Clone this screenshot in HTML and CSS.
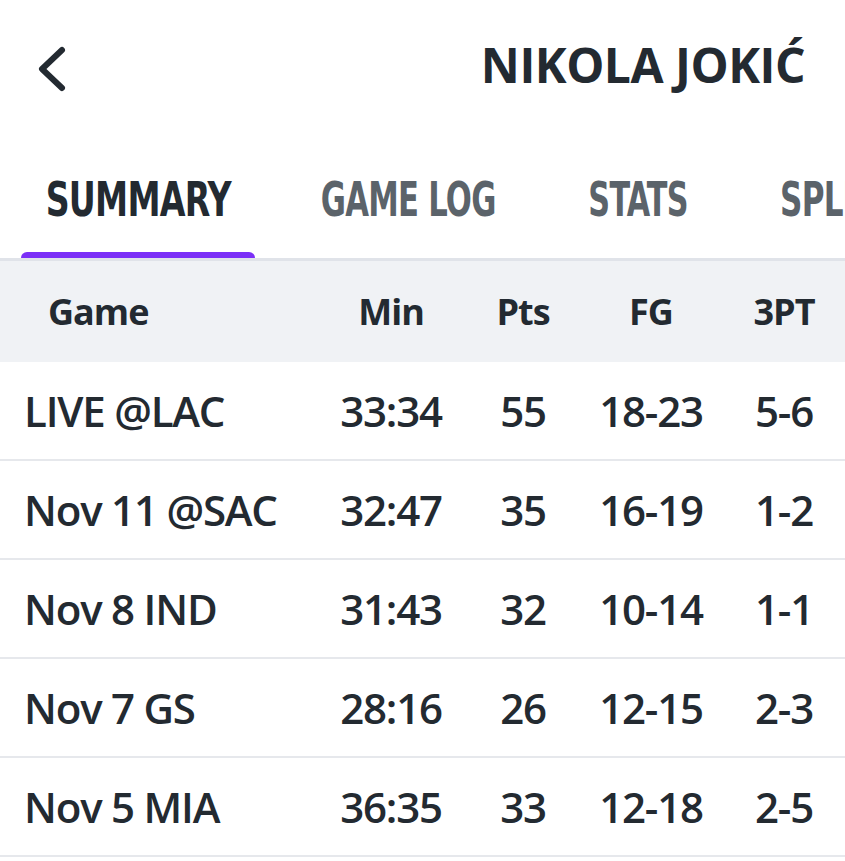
FILE: index.html
```html
<!DOCTYPE html>
<html>
<head>
<meta charset="utf-8">
<link rel="stylesheet" href="styles.css">
</head>
<body>
<div class="page">
  <header class="topbar">
    <svg class="back" width="44" height="60" viewBox="0 0 44 60">
      <path d="M37 10 L17 29 L37 48" fill="none" stroke="#232a31" stroke-width="6" stroke-linecap="round" stroke-linejoin="round"/>
    </svg>
    <h1 class="title">NIKOLA JOKIĆ</h1>
  </header>
  <nav class="tabs">
    <div class="tab tab-summary active"><span>SUMMARY</span></div>
    <div class="tab tab-log"><span>GAME LOG</span></div>
    <div class="tab tab-stats"><span>STATS</span></div>
    <div class="tab tab-splits"><span>SPLITS</span></div>
  </nav>
  <div class="table">
    <div class="row head">
      <div class="c game">Game</div><div class="c">Min</div><div class="c">Pts</div><div class="c">FG</div><div class="c">3PT</div>
    </div>
    <div class="row">
      <div class="c game">LIVE @LAC</div><div class="c">33:34</div><div class="c">55</div><div class="c">18-23</div><div class="c">5-6</div>
    </div>
    <div class="row">
      <div class="c game">Nov 11 @SAC</div><div class="c">32:47</div><div class="c">35</div><div class="c">16-19</div><div class="c">1-2</div>
    </div>
    <div class="row">
      <div class="c game">Nov 8 IND</div><div class="c">31:43</div><div class="c">32</div><div class="c">10-14</div><div class="c">1-1</div>
    </div>
    <div class="row">
      <div class="c game">Nov 7 GS</div><div class="c">28:16</div><div class="c">26</div><div class="c">12-15</div><div class="c">2-3</div>
    </div>
    <div class="row">
      <div class="c game">Nov 5 MIA</div><div class="c">36:35</div><div class="c">33</div><div class="c">12-18</div><div class="c">2-5</div>
    </div>
  </div>
</div>
</body>
</html>
```
FILE: styles.css
```css
html, body {
  margin: 0;
  padding: 0;
  background: #ffffff;
}
body {
  font-family: "Open Sans", "Noto Sans", sans-serif;
  color: #232a31;
  width: 845px;
  height: 861px;
  overflow: hidden;
}
.page {
  width: 845px;
}
.topbar {
  height: 140px;
  display: flex;
  align-items: flex-start;
  justify-content: space-between;
  padding: 0 40px 0 25px;
  box-sizing: border-box;
}
.back {
  display: block;
  margin-top: 40px;
}
.title {
  margin: 32px 0 0 0;
  font-size: 48px;
  line-height: 65px;
  font-weight: 700;
  letter-spacing: -0.5px;
  color: #232a31;
}
.tabs {
  display: flex;
  height: 121px;
  border-bottom: 3px solid #e0e3e9;
  box-sizing: border-box;
  padding-left: 21px;
  overflow: hidden;
  white-space: nowrap;
}
.tab {
  font-family: "DejaVu Sans Condensed", "DejaVu Sans", sans-serif;
  font-stretch: condensed;
  font-size: 48px;
  font-weight: 700;
  color: #5b636a;
  padding-top: 31px;
  flex: none;
  position: relative;
  display: flex;
  justify-content: center;
  box-sizing: border-box;
}
.tab span {
  display: inline-block;
  letter-spacing: -1px;
  transform: scaleX(0.77);
  transform-origin: center;
}
.tab-summary { width: 234px; margin-right: 42px; }
.tab-log { width: 223px; margin-right: 43px; }
.tab-log span { transform: scaleX(0.71); }
.tab-stats { width: 150px; margin-right: 67px; }
.tab-stats span { transform: scaleX(0.70); }
.tab-splits { width: 190px; justify-content: flex-start; }
.tab-splits span { transform: scaleX(0.72); transform-origin: left center; }
.tab.active {
  color: #232a31;
}
.tab.active::after {
  content: "";
  position: absolute;
  left: 0;
  right: 0;
  bottom: 0;
  height: 6px;
  background: #7b2ff7;
  border-radius: 6px 6px 0 0;
}
.row {
  display: grid;
  grid-template-columns: 290px 154px 110px 146px 120px;
  padding-left: 24px;
  height: 97px;
  align-items: center;
  border-bottom: 2px solid #e6e8ec;
  font-size: 42px;
  font-weight: 600;
  letter-spacing: -1.2px;
}
.row.head {
  background: #f0f2f5;
  height: 101px;
  border-bottom: none;
  font-size: 36px;
  font-weight: 700;
  letter-spacing: -1px;
}
.c {
  text-align: center;
  white-space: nowrap;
}
.c.game {
  text-align: left;
}
.head .c.game {
  padding-left: 24px;
}
```
